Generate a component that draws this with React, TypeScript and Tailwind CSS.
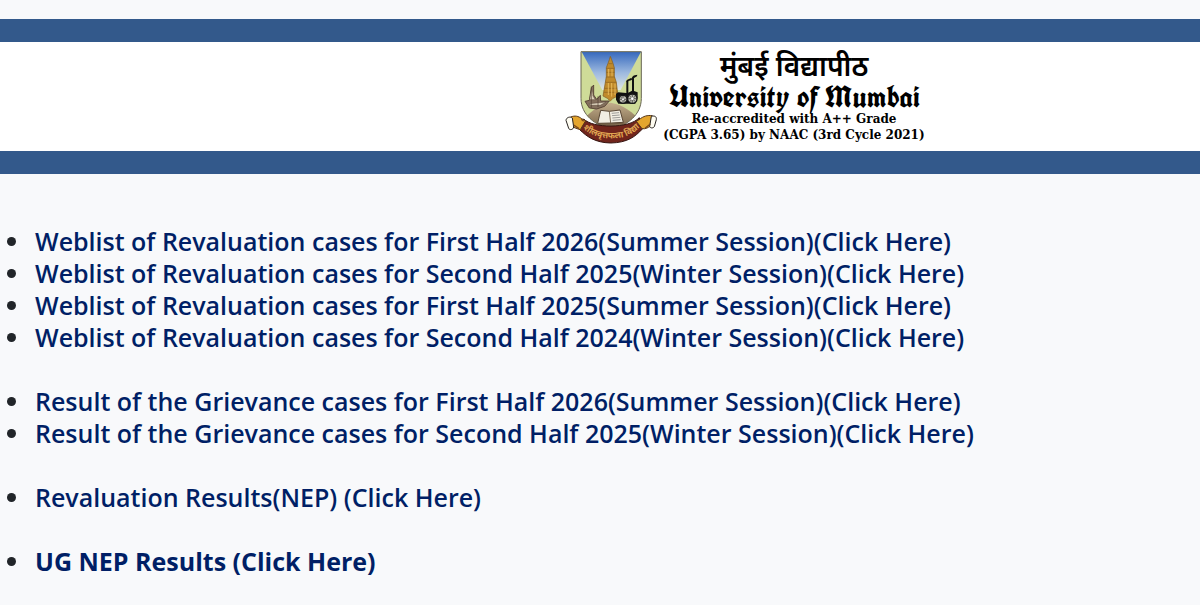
type Result = { label: string; bold?: boolean };

const groups: Result[][] = [
  [
    { label: "Weblist of Revaluation cases for First Half 2026(Summer Session)(Click Here)" },
    { label: "Weblist of Revaluation cases for Second Half 2025(Winter Session)(Click Here)" },
    { label: "Weblist of Revaluation cases for First Half 2025(Summer Session)(Click Here)" },
    { label: "Weblist of Revaluation cases for Second Half 2024(Winter Session)(Click Here)" },
  ],
  [
    { label: "Result of the Grievance cases for First Half 2026(Summer Session)(Click Here)" },
    { label: "Result of the Grievance cases for Second Half 2025(Winter Session)(Click Here)" },
  ],
  [{ label: "Revaluation Results(NEP) (Click Here)" }],
  [{ label: "UG NEP Results (Click Here)", bold: true }],
];

function Crest() {
  return (
    <svg viewBox="12 12 288 288" className="size-24 shrink-0" aria-hidden="true">
      <defs>
        <linearGradient id="sky" x1="0" y1="0" x2="0" y2="1">
          <stop offset="0" stopColor="#3568bd" />
          <stop offset="0.55" stopColor="#9db9df" />
          <stop offset="1" stopColor="#dfe6e4" />
        </linearGradient>
        <linearGradient id="ground" x1="0" y1="0" x2="0" y2="1">
          <stop offset="0" stopColor="#c3ae8c" />
          <stop offset="1" stopColor="#6f5a40" />
        </linearGradient>
        <clipPath id="shield">
          <path d="M66 20H247V160C247 210 205 240 157 255C108 240 66 210 66 160Z" />
        </clipPath>
      </defs>
      <g clipPath="url(#shield)">
        <rect x="60" y="15" width="195" height="245" fill="#cfdb98" />
        <path d="M68 20H246L185 135H130Z" fill="url(#sky)" />
        <path d="M65 235C85 205 120 178 155 173C190 178 225 202 250 235L157 260Z" fill="url(#ground)" />
      </g>
      {/* clock tower */}
      <path d="M154 34L158 44L162 55L166 68V94L172 112L177 153L162 160L154 168L145 160L132 153L139 112L142 94V68L147 55L151 44Z" fill="#c08a2b" stroke="#80591c" strokeWidth="2" />
      <path d="M142 70H166M142 82H167M141 96H168M139 112H172M136 130H174M135 142H176M149 56H160" stroke="#8d611f" strokeWidth="2" />
      <path d="M149 72V94M159 72V94M148 114V150M158 114V155M168 116V150" stroke="#edc263" strokeWidth="2.5" />
      {/* ship */}
      <path d="M78 169L91 166L97 128L104 120V150L113 163L124 151L125 168L151 168L137 184L113 192L91 189Z" fill="#84705d" stroke="#4d382c" strokeWidth="2.5" />
      <path d="M98 132L92 164H109L101 151M91 176L141 171L124 181H96Z" fill="#ddd2bc" stroke="#58463a" strokeWidth="1.5" />
      <path d="M97 124V188M117 154V186" stroke="#4e3c30" strokeWidth="2" />
      {/* factory and gears */}
      <path d="M171 146L178 142L202 144V108H208V143L219 137V101L225 100V138L236 142V158L229 176H178L171 164Z" fill="#111" />
      <path d="M204 110C205 102 213 107 218 101M221 103C221 91 233 96 232 90" fill="none" stroke="#111" strokeWidth="6" />
      <g fill="#bcbcb0" stroke="#171717" strokeWidth="4">
        <circle cx="192" cy="163" r="12" />
        <circle cx="220" cy="161" r="14" />
      </g>
      <path d="M182 163H202M192 153V173M208 161H233M220 148V174M184 155L200 171M211 152L230 171M211 171L230 152" stroke="#292929" strokeWidth="2" />
      <circle cx="220" cy="161" r="4" fill="#fff" />
      <circle cx="192" cy="163" r="3" fill="#fff" />
      {/* open book */}
      <path d="M125 196L151 199L183 195L193 232L157 234L116 235Z" fill="#f2eee3" stroke="#584634" strokeWidth="3" />
      <path d="M151 199L155 234M118 238L157 237L194 234" fill="none" stroke="#66543d" strokeWidth="2.5" />
      <path d="M158 205L180 203M159 212L182 210M160 219L184 217M161 226L185 224" stroke="#9c9b98" strokeWidth="3" />
      <path d="M66 20H247V160C247 210 205 240 157 255C108 240 66 210 66 160Z" fill="none" stroke="#686552" strokeWidth="3" />
      {/* ribbon */}
      <path d="M74 222C101 250 210 252 241 218L250 252C229 275 205 293 155 294C108 293 84 275 62 254Z" fill="#71251c" stroke="#351511" strokeWidth="3" />
      <path d="M35 216C48 211 58 213 68 221L80 227L64 254C57 253 51 249 44 247Z" fill="#e4a52d" stroke="#54351a" strokeWidth="3" />
      <path d="M280 212C265 210 254 213 240 224L232 229L249 251C261 253 267 247 274 244Z" fill="#e4a52d" stroke="#54351a" strokeWidth="3" />
      <path d="M21 226C22 216 35 214 40 219L44 246C43 255 31 256 29 250Z" fill="#fffdf2" stroke="#272320" strokeWidth="3" />
      <path d="M277 214C289 211 293 216 292 224L286 245C281 251 273 249 272 244Z" fill="#fffdf2" stroke="#272320" strokeWidth="3" />
      <path d="M44 240L60 251M274 237L258 250M67 223L74 229" stroke="#7b4919" strokeWidth="4" />
      <path id="motto" d="M70 248C112 290 202 294 244 244" fill="none" />
      <text fill="#e0a552" fontSize="26" fontWeight="700" fontFamily="'Noto Sans Devanagari', 'Noto Sans', sans-serif">
        <textPath href="#motto" startOffset="50%" textAnchor="middle">शीलवृत्तफला विद्या</textPath>
      </text>
    </svg>
  );
}

export default function App() {
  return (
    <div className="min-h-screen bg-[#f8f9fb] pt-[19px] font-['Open_Sans','Noto_Sans',sans-serif] text-[#212529]">
      <header className="flex h-[155px] items-center justify-center border-y-[23px] border-[#33598b] bg-white pl-72">
        <Crest />
        <div className="flex flex-col items-center pl-1 whitespace-nowrap text-black">
          <p className="font-['Noto_Sans',sans-serif] text-[28px] leading-8 font-semibold" lang="mr">मुंबई विद्यापीठ</p>
          <h1 className="font-['UnifrakturCook','Old_English_Text_MT','Liberation_Serif',serif] text-[30px] leading-8 font-bold">University of Mumbai</h1>
          <p className="font-['DejaVu_Serif',serif] text-[12px] leading-3 font-bold">Re-accredited with A++ Grade</p>
          <p className="font-['DejaVu_Serif',serif] text-[12px] leading-5 font-bold">(CGPA 3.65) by NAAC (3rd Cycle 2021)</p>
        </div>
      </header>
      <main className="space-y-8 pt-[51px] pb-7 pl-8 text-[25px] leading-8">
        {groups.map((group) => (
          <ul key={group[0].label} className="list-disc">
            {group.map((item) => (
              <li key={item.label} className="pl-[3px]">
                <a href="#" className={item.bold ? "font-bold text-[#001f66]" : "font-semibold text-[#001f66]"}>
                  {item.label}
                </a>
              </li>
            ))}
          </ul>
        ))}
      </main>
    </div>
  );
}
